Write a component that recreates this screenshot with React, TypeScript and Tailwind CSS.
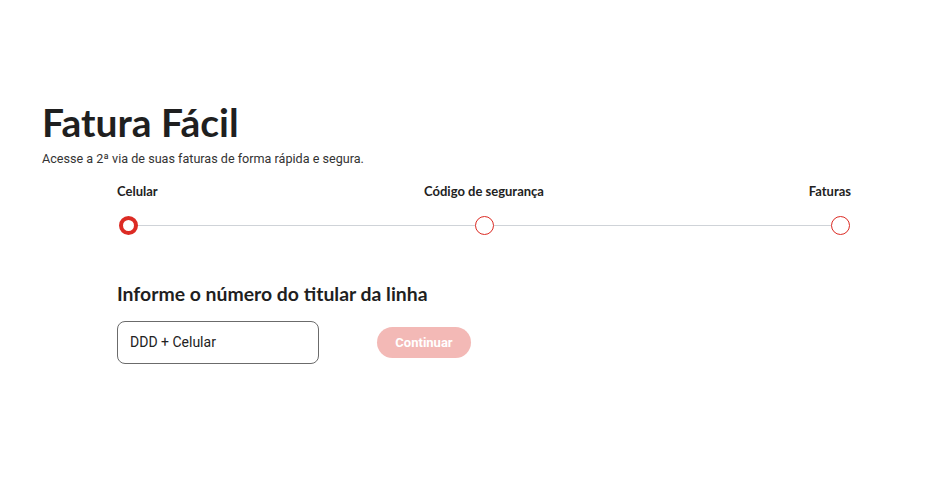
export default function App() {
  const steps = [
    { label: 'Celular', active: true },
    { label: 'Código de segurança', active: false },
    { label: 'Faturas', active: false },
  ];
  const align = ['text-left', 'text-center', 'text-right'];

  return (
    <div className="w-[940px] h-[480px] bg-white font-['Roboto',sans-serif] text-[#222]">
      <div className="pt-[99px] px-[42px]">
        <h1 className="text-[39px] leading-[47px] font-bold font-['Lato',sans-serif] text-[#1f1f1f]">
          Fatura Fácil
        </h1>
        <p className="mt-[4px] text-[12.6px] leading-[18px] text-[#333]">
          Acesse a 2ª via de suas faturas de forma rápida e segura.
        </p>
      </div>

      <div className="ml-[117px] w-[734px] mt-[14px]">
        <div className="grid grid-cols-3 text-[13px] font-bold font-['Lato',sans-serif] text-[#222] leading-[18px]">
          {steps.map((s, i) => (
            <span key={s.label} className={align[i]}>
              {s.label}
            </span>
          ))}
        </div>
        <div className="relative mt-[15px] h-[20px] flex items-center justify-between px-[1.5px]">
          <div className="absolute left-[10px] right-[10px] top-[10px] h-px bg-[#cfd3d8]" />
          {steps.map((s) => (
            <div
              key={s.label}
              className={`relative z-10 w-[19px] h-[19px] rounded-full bg-white ${
                s.active ? 'border-[4px] border-[#dc2b24]' : 'border-[1.5px] border-[#dc2b24]'
              }`}
            />
          ))}
        </div>
      </div>

      <div className="mx-[117px] mt-[47px]">
        <h2 className="text-[19.4px] leading-[24px] font-bold font-['Lato',sans-serif] text-[#1f1f1f]">
          Informe o número do titular da linha
        </h2>
        <div className="mt-[15px] flex items-center gap-[58px]">
          <div className="w-[202px] h-[43px] rounded-[8px] border border-[#6b6b6b] flex items-center px-[12px] text-[14px] text-[#222]">
            DDD + Celular
          </div>
          <button className="w-[94px] h-[31px] rounded-full bg-[#f3b9b6] text-white text-[13px] font-bold">
            Continuar
          </button>
        </div>
      </div>
    </div>
  );
}
